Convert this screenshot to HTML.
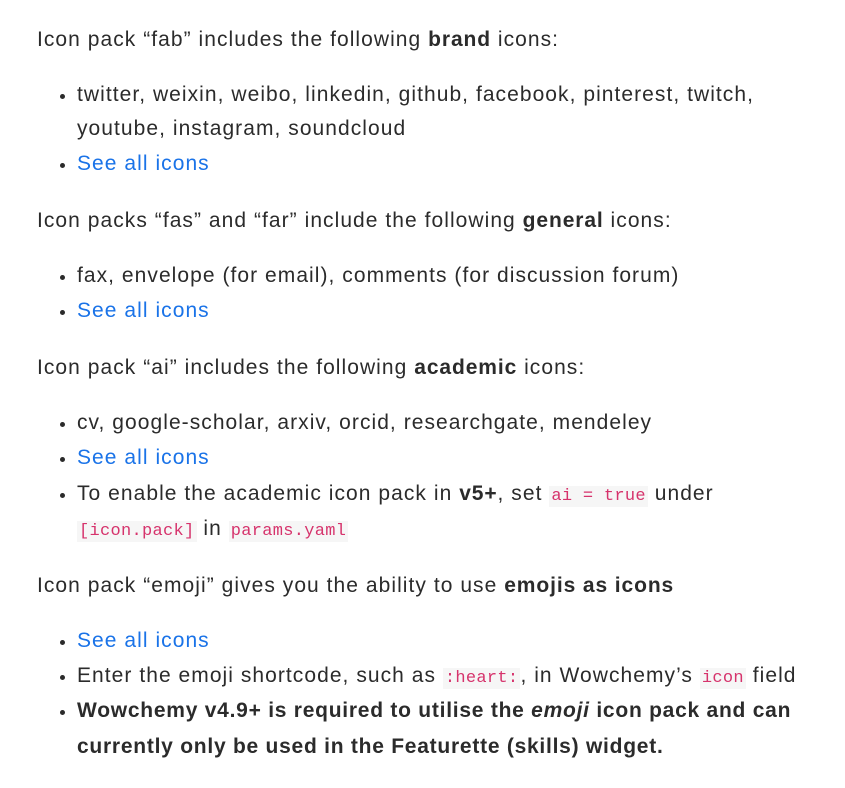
<!DOCTYPE html>
<html><head><meta charset="utf-8"><style>
html,body{margin:0;padding:0;background:#fff;}
body{width:845px;height:757px;overflow:hidden;font-family:"Liberation Sans",sans-serif;font-size:21px;color:#2b2b2b;letter-spacing:1.05px;}
.c{position:absolute;left:37px;top:23px;width:800px;}
p{margin:0 0 21px;line-height:34px;}
ul{margin:0 0 23px;padding-left:40px;}
li{line-height:34px;margin-bottom:1px;}
li::marker{font-size:18px;}
li.l{line-height:36px;margin-top:-1px;}
a{color:#1a73e8;text-decoration:none;}
b{font-weight:bold;letter-spacing:0.9px;}
li.l b{letter-spacing:0.75px;}
code{font-family:"Liberation Mono",monospace;font-size:17px;line-height:1;color:#d6336c;background:#f6f6f6;padding:1px 2px;letter-spacing:0.3px;}
</style></head><body><div class="c">
<p>Icon pack “fab” includes the following <b>brand</b> icons:</p>
<ul><li>twitter, weixin, weibo, linkedin, github, facebook, pinterest, twitch,<br>youtube, instagram, soundcloud</li><li><a>See all icons</a></li></ul>
<p>Icon packs “fas” and “far” include the following <b>general</b> icons:</p>
<ul><li>fax, envelope (for email), comments (for discussion forum)</li><li><a>See all icons</a></li></ul>
<p>Icon pack “ai” includes the following <b>academic</b> icons:</p>
<ul><li>cv, google-scholar, arxiv, orcid, researchgate, mendeley</li><li><a>See all icons</a></li><li style="line-height:35px">To enable the academic icon pack in <b>v5+</b>, set <code>ai = true</code> under<br><code>[icon.pack]</code> in <code>params.yaml</code></li></ul>
<p>Icon pack “emoji” gives you the ability to use <b>emojis as icons</b></p>
<ul><li><a>See all icons</a></li><li>Enter the emoji shortcode, such as <code>:heart:</code>, in Wowchemy’s <code>icon</code> field</li><li class="l"><b>Wowchemy v4.9+ is required to utilise the <i>emoji</i> icon pack and can<br>currently only be used in the Featurette (skills) widget.</b></li></ul>
</div></body></html>
